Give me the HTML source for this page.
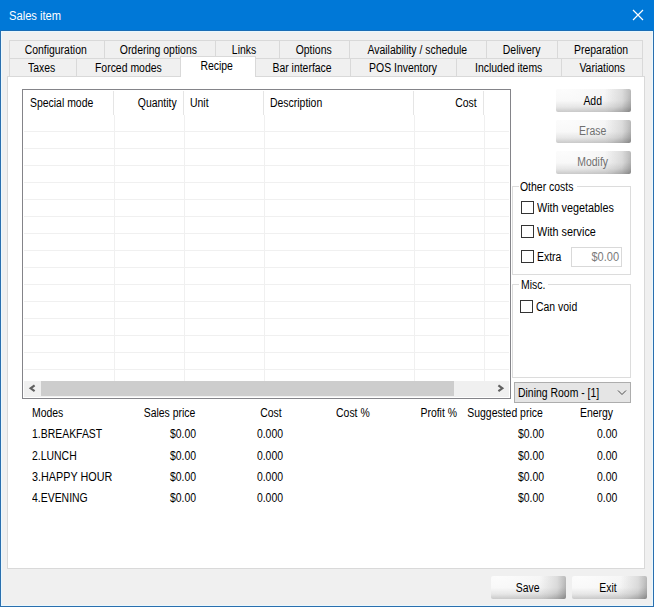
<!DOCTYPE html>
<html><head><meta charset="utf-8">
<style>
*{box-sizing:border-box;margin:0;padding:0}
html,body{width:654px;height:607px;overflow:hidden;background:#f0f0f0;font-family:"Liberation Sans",sans-serif;font-size:12px;color:#000;position:relative}
.a{position:absolute}
.t{position:absolute;white-space:nowrap;line-height:14px;transform:scaleX(.87);transform-origin:0 0}
.r{position:absolute;white-space:nowrap;line-height:14px;transform:scaleX(.87);transform-origin:100% 0;text-align:right}
.c{position:absolute;white-space:nowrap;line-height:14px;text-align:center}
.c span{display:inline-block;transform:scaleX(.87)}
.tab{position:absolute;background:#f0f0f0;border:1px solid #d9d9d9;height:19px}
.tab span{position:absolute;left:-2px;right:0;top:2px;text-align:center;line-height:14px;white-space:nowrap}
.tab span i{font-style:normal;display:inline-block;transform:scaleX(.87)}
.vl{position:absolute;width:1px;background:#f0f0f0}
.hl{position:absolute;height:1px;background:#f0f0f0;left:24px;width:485px}
.hs{position:absolute;width:1px;background:#e5e5e5;top:91px;height:24px}
.btn{position:absolute;width:75px;height:23px;border-radius:2px;
 background:linear-gradient(180deg,rgba(0,0,0,0) 50%,rgba(0,0,0,.06) 76%,rgba(0,0,0,.17) 100%),linear-gradient(90deg,rgba(0,0,0,0) 65%,rgba(0,0,0,.07) 88%,rgba(0,0,0,.2) 100%),radial-gradient(ellipse 110% 170% at 10% 0%,#fcfcfc 0%,#f6f6f6 50%,#e8e8e8 80%,#d0d0d0 95%,#c4c4c4 100%)}
.btn span{position:absolute;left:-2px;right:0;top:5px;text-align:center;line-height:14px;white-space:nowrap}
.btn span i{font-style:normal;display:inline-block;transform:scaleX(.87)}
.dis{color:#6f6f6f}
.grp{position:absolute;border:1px solid #dcdcdc}
.cb{position:absolute;width:13px;height:13px;border:1px solid #333;background:#fff}
</style></head>
<body>
<!-- window frame -->
<div class="a" style="left:0;top:0;width:654px;height:607px;border:1px solid #2a6fae"></div>
<div class="a" style="left:1px;top:31px;width:652px;height:575px;border:1px solid #e9f8ff;border-top:none"></div>
<div class="a" style="left:0;top:0;width:654px;height:31px;background:#0078d7"></div>
<div class="a" style="left:1px;top:30px;width:652px;height:1px;background:#1a6db5"></div>
<div class="a" style="left:1px;top:31px;width:652px;height:1px;background:#e6f7ff"></div>
<div class="t" style="left:9px;top:9px;color:#fff;transform:scaleX(.93)">Sales item</div>
<svg class="a" style="left:632px;top:9px" width="12" height="12" viewBox="0 0 12 12"><path d="M1 1L11 11M11 1L1 11" stroke="#fff" stroke-width="1.2" fill="none"/></svg>

<!-- tab panel -->
<div class="a" style="left:7px;top:76px;width:638px;height:493px;background:#fff;border:1px solid #d9d9d9"></div>

<!-- tab row 1 -->
<div class="tab" style="left:9px;top:40px;width:96px"><span><i>Configuration</i></span></div>
<div class="tab" style="left:104px;top:40px;width:112px"><span style="left:-3px;right:1px"><i>Ordering options</i></span></div>
<div class="tab" style="left:215px;top:40px;width:65px"><span style="left:-4px;right:2px"><i>Links</i></span></div>
<div class="tab" style="left:279px;top:40px;width:71px"><span><i>Options</i></span></div>
<div class="tab" style="left:349px;top:40px;width:138px"><span><i>Availability / schedule</i></span></div>
<div class="tab" style="left:486px;top:40px;width:72px"><span style="left:-1px;right:-1px"><i>Delivery</i></span></div>
<div class="tab" style="left:557px;top:40px;width:86px"><span style="left:0px;right:-2px"><i>Preparation</i></span></div>
<!-- tab row 2 -->
<div class="tab" style="left:9px;top:58px;width:68px"><span><i>Taxes</i></span></div>
<div class="tab" style="left:76px;top:58px;width:105px"><span style="left:-1px;right:-1px"><i>Forced modes</i></span></div>
<div class="tab" style="left:255px;top:58px;width:96px"><span><i>Bar interface</i></span></div>
<div class="tab" style="left:350px;top:58px;width:107px"><span style="left:-1px;right:-1px"><i>POS Inventory</i></span></div>
<div class="tab" style="left:456px;top:58px;width:106px"><span style="left:-1px;right:-1px"><i>Included items</i></span></div>
<div class="tab" style="left:561px;top:58px;width:82px"><span style="left:-1px;right:-1px"><i>Variations</i></span></div>
<div class="tab" style="left:180px;top:56px;width:76px;height:21px;background:#fff;border-bottom:none"><span style="top:2px"><i>Recipe</i></span></div>

<!-- grid -->
<div class="a" style="left:22px;top:89px;width:489px;height:310px;border:1px solid #848489;background:#fff"></div>
<div class="hs" style="left:113px"></div>
<div class="hs" style="left:183px"></div>
<div class="hs" style="left:263px"></div>
<div class="hs" style="left:413px"></div>
<div class="hs" style="left:483px"></div>
<div class="vl" style="left:114px;top:115px;height:266px"></div>
<div class="vl" style="left:184px;top:115px;height:266px"></div>
<div class="vl" style="left:264px;top:115px;height:266px"></div>
<div class="vl" style="left:414px;top:115px;height:266px"></div>
<div class="vl" style="left:484px;top:115px;height:266px"></div>
<div class="hl" style="top:131px"></div>
<div class="hl" style="top:148px"></div>
<div class="hl" style="top:165px"></div>
<div class="hl" style="top:182px"></div>
<div class="hl" style="top:199px"></div>
<div class="hl" style="top:216px"></div>
<div class="hl" style="top:233px"></div>
<div class="hl" style="top:250px"></div>
<div class="hl" style="top:267px"></div>
<div class="hl" style="top:284px"></div>
<div class="hl" style="top:301px"></div>
<div class="hl" style="top:318px"></div>
<div class="hl" style="top:335px"></div>
<div class="hl" style="top:352px"></div>
<div class="hl" style="top:369px"></div>
<div class="t" style="left:30px;top:96px">Special mode</div>
<div class="r" style="right:477px;top:96px">Quantity</div>
<div class="t" style="left:190px;top:96px">Unit</div>
<div class="t" style="left:270px;top:96px">Description</div>
<div class="r" style="right:177px;top:96px">Cost</div>
<!-- scrollbar -->
<div class="a" style="left:24px;top:381px;width:485px;height:16px;background:#f0f0f0"></div>
<div class="a" style="left:41px;top:381px;width:413px;height:15px;background:#cdcdcd"></div>
<svg class="a" style="left:28px;top:383px" width="9" height="10" viewBox="0 0 9 10"><path d="M6.6 2.4L2.6 5.3L6.6 8.2" stroke="#606060" stroke-width="2.1" fill="none"/></svg>
<svg class="a" style="left:496px;top:383px" width="9" height="10" viewBox="0 0 9 10"><path d="M2.4 2.4L6.4 5.3L2.4 8.2" stroke="#606060" stroke-width="2.1" fill="none"/></svg>

<!-- right buttons -->
<div class="btn" style="left:556px;top:89px"><span><i>Add</i></span></div>
<div class="btn dis" style="left:556px;top:120px"><span style="top:4px"><i>Erase</i></span></div>
<div class="btn dis" style="left:556px;top:151px"><span style="top:4px"><i>Modify</i></span></div>

<!-- other costs group -->
<div class="grp" style="left:512px;top:186px;width:119px;height:89px"></div>
<div class="a" style="left:519px;top:182px;width:58px;height:8px;background:#fff"></div>
<div class="t" style="left:520px;top:180px">Other costs</div>
<div class="cb" style="left:521px;top:201px"></div>
<div class="t" style="left:537px;top:201px;transform:scaleX(.9)">With vegetables</div>
<div class="cb" style="left:521px;top:225px"></div>
<div class="t" style="left:537px;top:225px;transform:scaleX(.9)">With service</div>
<div class="cb" style="left:521px;top:250px"></div>
<div class="t" style="left:537px;top:250px">Extra</div>
<div class="a" style="left:571px;top:247px;width:51px;height:20px;border:1px solid #d9d9d9;background:#fff"></div>
<div class="r" style="right:35px;top:250px;color:#7a7a7a;transform:scaleX(.92)">$0.00</div>

<!-- misc group -->
<div class="grp" style="left:512px;top:284px;width:119px;height:94px"></div>
<div class="a" style="left:519px;top:280px;width:29px;height:8px;background:#fff"></div>
<div class="t" style="left:521px;top:278px">Misc.</div>
<div class="cb" style="left:520px;top:300px"></div>
<div class="t" style="left:536px;top:300px">Can void</div>

<!-- dropdown -->
<div class="a" style="left:514px;top:382px;width:117px;height:21px;background:#e5e5e5;border:1px solid #adadad"></div>
<div class="t" style="left:518px;top:386px">Dining Room - [1]</div>
<svg class="a" style="left:617px;top:389px" width="10" height="7" viewBox="0 0 10 7"><path d="M1 1.5L5 5.5L9 1.5" stroke="#3a3a3a" stroke-width="0.9" fill="none"/></svg>

<!-- modes table -->
<div class="t" style="left:32px;top:406px">Modes</div>
<div class="r" style="right:459px;top:406px">Sales price</div>
<div class="r" style="right:372px;top:406px">Cost</div>
<div class="r" style="right:284px;top:406px">Cost %</div>
<div class="r" style="right:197px;top:406px">Profit %</div>
<div class="r" style="right:111px;top:406px">Suggested price</div>
<div class="r" style="right:41px;top:406px">Energy</div>

<div class="t" style="left:32px;top:427px">1.BREAKFAST</div>
<div class="r" style="right:458px;top:427px">$0.00</div>
<div class="r" style="right:371px;top:427px">0.000</div>
<div class="r" style="right:110px;top:427px">$0.00</div>
<div class="r" style="right:37px;top:427px">0.00</div>

<div class="t" style="left:32px;top:449px">2.LUNCH</div>
<div class="r" style="right:458px;top:449px">$0.00</div>
<div class="r" style="right:371px;top:449px">0.000</div>
<div class="r" style="right:110px;top:449px">$0.00</div>
<div class="r" style="right:37px;top:449px">0.00</div>

<div class="t" style="left:32px;top:470px;transform:scaleX(.9)">3.HAPPY HOUR</div>
<div class="r" style="right:458px;top:470px">$0.00</div>
<div class="r" style="right:371px;top:470px">0.000</div>
<div class="r" style="right:110px;top:470px">$0.00</div>
<div class="r" style="right:37px;top:470px">0.00</div>

<div class="t" style="left:32px;top:491px">4.EVENING</div>
<div class="r" style="right:458px;top:491px">$0.00</div>
<div class="r" style="right:371px;top:491px">0.000</div>
<div class="r" style="right:110px;top:491px">$0.00</div>
<div class="r" style="right:37px;top:491px">0.00</div>

<!-- bottom buttons -->
<div class="btn" style="left:491px;top:576px"><span><i>Save</i></span></div>
<div class="btn" style="left:572px;top:576px"><span><i>Exit</i></span></div>
</body></html>
